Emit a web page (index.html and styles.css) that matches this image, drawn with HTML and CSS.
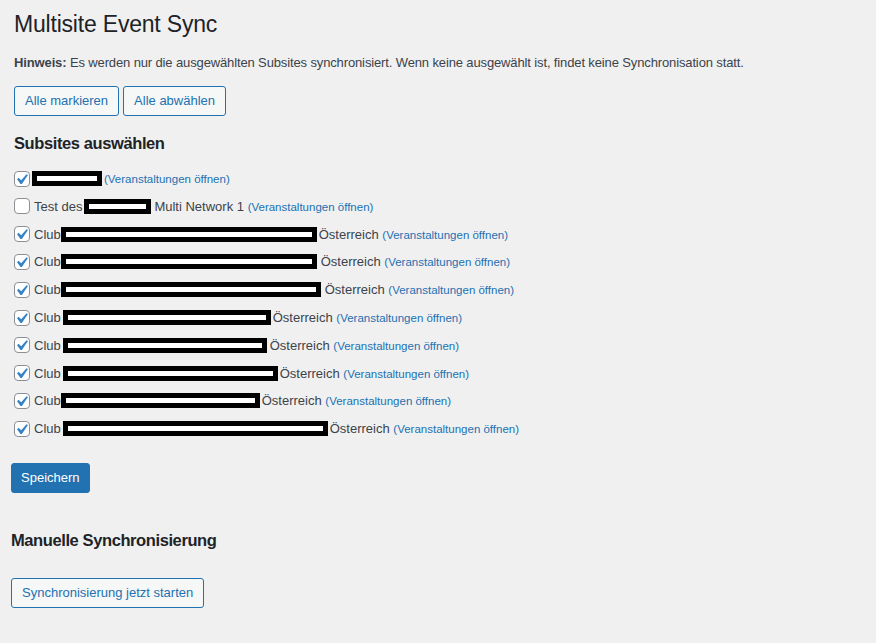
FILE: index.html
```html
<!DOCTYPE html>
<html lang="de">
<head>
    <meta charset="UTF-8">
    <meta name="viewport" content="width=device-width, initial-scale=1.0">
    <title>Multisite Event Sync</title>
    <link rel="stylesheet" href="styles.css">
</head>
<body>
<div class="wrap">
    <div class="inner">
        <h1>Multisite Event Sync</h1>
        <p class="hint"><strong>Hinweis:</strong> Es werden nur die ausgewählten Subsites synchronisiert. Wenn keine ausgewählt ist, findet keine Synchronisation statt.</p>

        <div class="actions">
            <button type="button" class="button">Alle markieren</button>
            <button type="button" class="button">Alle abwählen</button>
        </div>

        <h2>Subsites auswählen</h2>

        <!-- Site names are blacked out -->
        <div class="sites">
            <label class="site"><span class="box checked"><svg viewBox="0 0 20 20"><path d="M14.83 4.89l1.34.94-5.81 8.38H9.02L5.78 9.67l1.34-1.25 2.57 2.4z"/></svg></span><span class="redact r1"></span><a href="#">(Veranstaltungen öffnen)</a></label>
            <label class="site"><span class="box"></span>Test des<span class="redact r2"></span>Multi Network 1 <a href="#">(Veranstaltungen öffnen)</a></label>
            <label class="site"><span class="box checked"><svg viewBox="0 0 20 20"><path d="M14.83 4.89l1.34.94-5.81 8.38H9.02L5.78 9.67l1.34-1.25 2.57 2.4z"/></svg></span>Club<span class="redact r3"></span>Österreich <a href="#">(Veranstaltungen öffnen)</a></label>
            <label class="site"><span class="box checked"><svg viewBox="0 0 20 20"><path d="M14.83 4.89l1.34.94-5.81 8.38H9.02L5.78 9.67l1.34-1.25 2.57 2.4z"/></svg></span>Club<span class="redact r4"></span>Österreich <a href="#">(Veranstaltungen öffnen)</a></label>
            <label class="site"><span class="box checked"><svg viewBox="0 0 20 20"><path d="M14.83 4.89l1.34.94-5.81 8.38H9.02L5.78 9.67l1.34-1.25 2.57 2.4z"/></svg></span>Club<span class="redact r5"></span>Österreich <a href="#">(Veranstaltungen öffnen)</a></label>
            <label class="site"><span class="box checked"><svg viewBox="0 0 20 20"><path d="M14.83 4.89l1.34.94-5.81 8.38H9.02L5.78 9.67l1.34-1.25 2.57 2.4z"/></svg></span>Club<span class="redact r6"></span>Österreich <a href="#">(Veranstaltungen öffnen)</a></label>
            <label class="site"><span class="box checked"><svg viewBox="0 0 20 20"><path d="M14.83 4.89l1.34.94-5.81 8.38H9.02L5.78 9.67l1.34-1.25 2.57 2.4z"/></svg></span>Club<span class="redact r7"></span>Österreich <a href="#">(Veranstaltungen öffnen)</a></label>
            <label class="site"><span class="box checked"><svg viewBox="0 0 20 20"><path d="M14.83 4.89l1.34.94-5.81 8.38H9.02L5.78 9.67l1.34-1.25 2.57 2.4z"/></svg></span>Club<span class="redact r8"></span>Österreich <a href="#">(Veranstaltungen öffnen)</a></label>
            <label class="site"><span class="box checked"><svg viewBox="0 0 20 20"><path d="M14.83 4.89l1.34.94-5.81 8.38H9.02L5.78 9.67l1.34-1.25 2.57 2.4z"/></svg></span>Club<span class="redact r9"></span>Österreich <a href="#">(Veranstaltungen öffnen)</a></label>
            <label class="site"><span class="box checked"><svg viewBox="0 0 20 20"><path d="M14.83 4.89l1.34.94-5.81 8.38H9.02L5.78 9.67l1.34-1.25 2.57 2.4z"/></svg></span>Club<span class="redact r10"></span>Österreich <a href="#">(Veranstaltungen öffnen)</a></label>
        </div>
    </div>

    <button type="submit" class="button button-primary save">Speichern</button>

    <h2 class="manual">Manuelle Synchronisierung</h2>
    <button type="button" class="button">Synchronisierung jetzt starten</button>
</div>
</body>
</html>
```

FILE: styles.css
```css
body {
    margin: 0;
    background: #f0f0f1;
    color: #3c434a;
    font-family: "Liberation Sans", Arial, sans-serif;
    font-size: 13px;
}
.wrap {
    padding: 0 11px;
}
.inner {
    margin-left: 3px;
}
h1 {
    margin: 0;
    padding: 9px 0 4px;
    font-size: 23px;
    font-weight: 400;
    line-height: 30px;
    letter-spacing: -0.2px;
    color: #1d2327;
}
h2 {
    margin: 16px 0 11px;
    font-size: 16.5px;
    font-weight: 700;
    line-height: 22px;
    letter-spacing: -0.4px;
    color: #1d2327;
}
.hint {
    margin: 10px 0 13px;
    line-height: 20px;
    letter-spacing: -0.13px;
}
.hint strong {
    font-weight: 700;
}
.actions {
    display: flex;
    gap: 4px;
}
.button {
    display: inline-block;
    box-sizing: border-box;
    min-height: 30px;
    margin: 0;
    padding: 0 10px;
    font-family: inherit;
    font-size: 13px;
    line-height: 28px;
    color: #2271b1;
    background: #f6f7f7;
    border: 1px solid #2271b1;
    border-radius: 3px;
    cursor: pointer;
}
.button-primary {
    color: #fff;
    background: #2271b1;
}
.save {
    margin-top: 20px;
    padding: 0 9px;
}
.manual {
    margin: 36px 0 27px;
}

/* checkbox list */
.site {
    display: block;
    height: 27.8px;
    line-height: 27.8px;
    white-space: nowrap;
}
.box {
    display: inline-block;
    box-sizing: border-box;
    width: 16px;
    height: 16px;
    margin-right: 4px;
    vertical-align: middle;
    position: relative;
    top: -1px;
    background: #fff;
    border: 1px solid #8c8f94;
    border-radius: 4px;
}
.box svg {
    display: block;
    width: 21px;
    height: 21px;
    margin: -3px 0 0 -4px;
    fill: #3582c4;
}
.site a {
    color: #2271b1;
    font-size: 11.5px;
    text-decoration: none;
}
.redact {
    display: inline-block;
    height: 5px;
    border: 5px solid #000;
    background: #fff;
    vertical-align: middle;
    position: relative;
    top: -1px;
    margin-right: 2px;
}
.r1 { width: 60px; margin-left: -2px; }
.r2 { width: 57px; margin-left: 2px; margin-right: 3px; }
.r3 { width: 246px; }
.r4 { width: 246px; margin-right: 4px; }
.r5 { width: 250px; margin-right: 4px; }
.r6 { width: 198px; margin-left: 2px; }
.r7 { width: 194px; margin-left: 2px; margin-right: 3px; }
.r8 { width: 205px; margin-left: 2px; }
.r9 { width: 189px; }
.r10 { width: 255px; margin-left: 2px; }
```
